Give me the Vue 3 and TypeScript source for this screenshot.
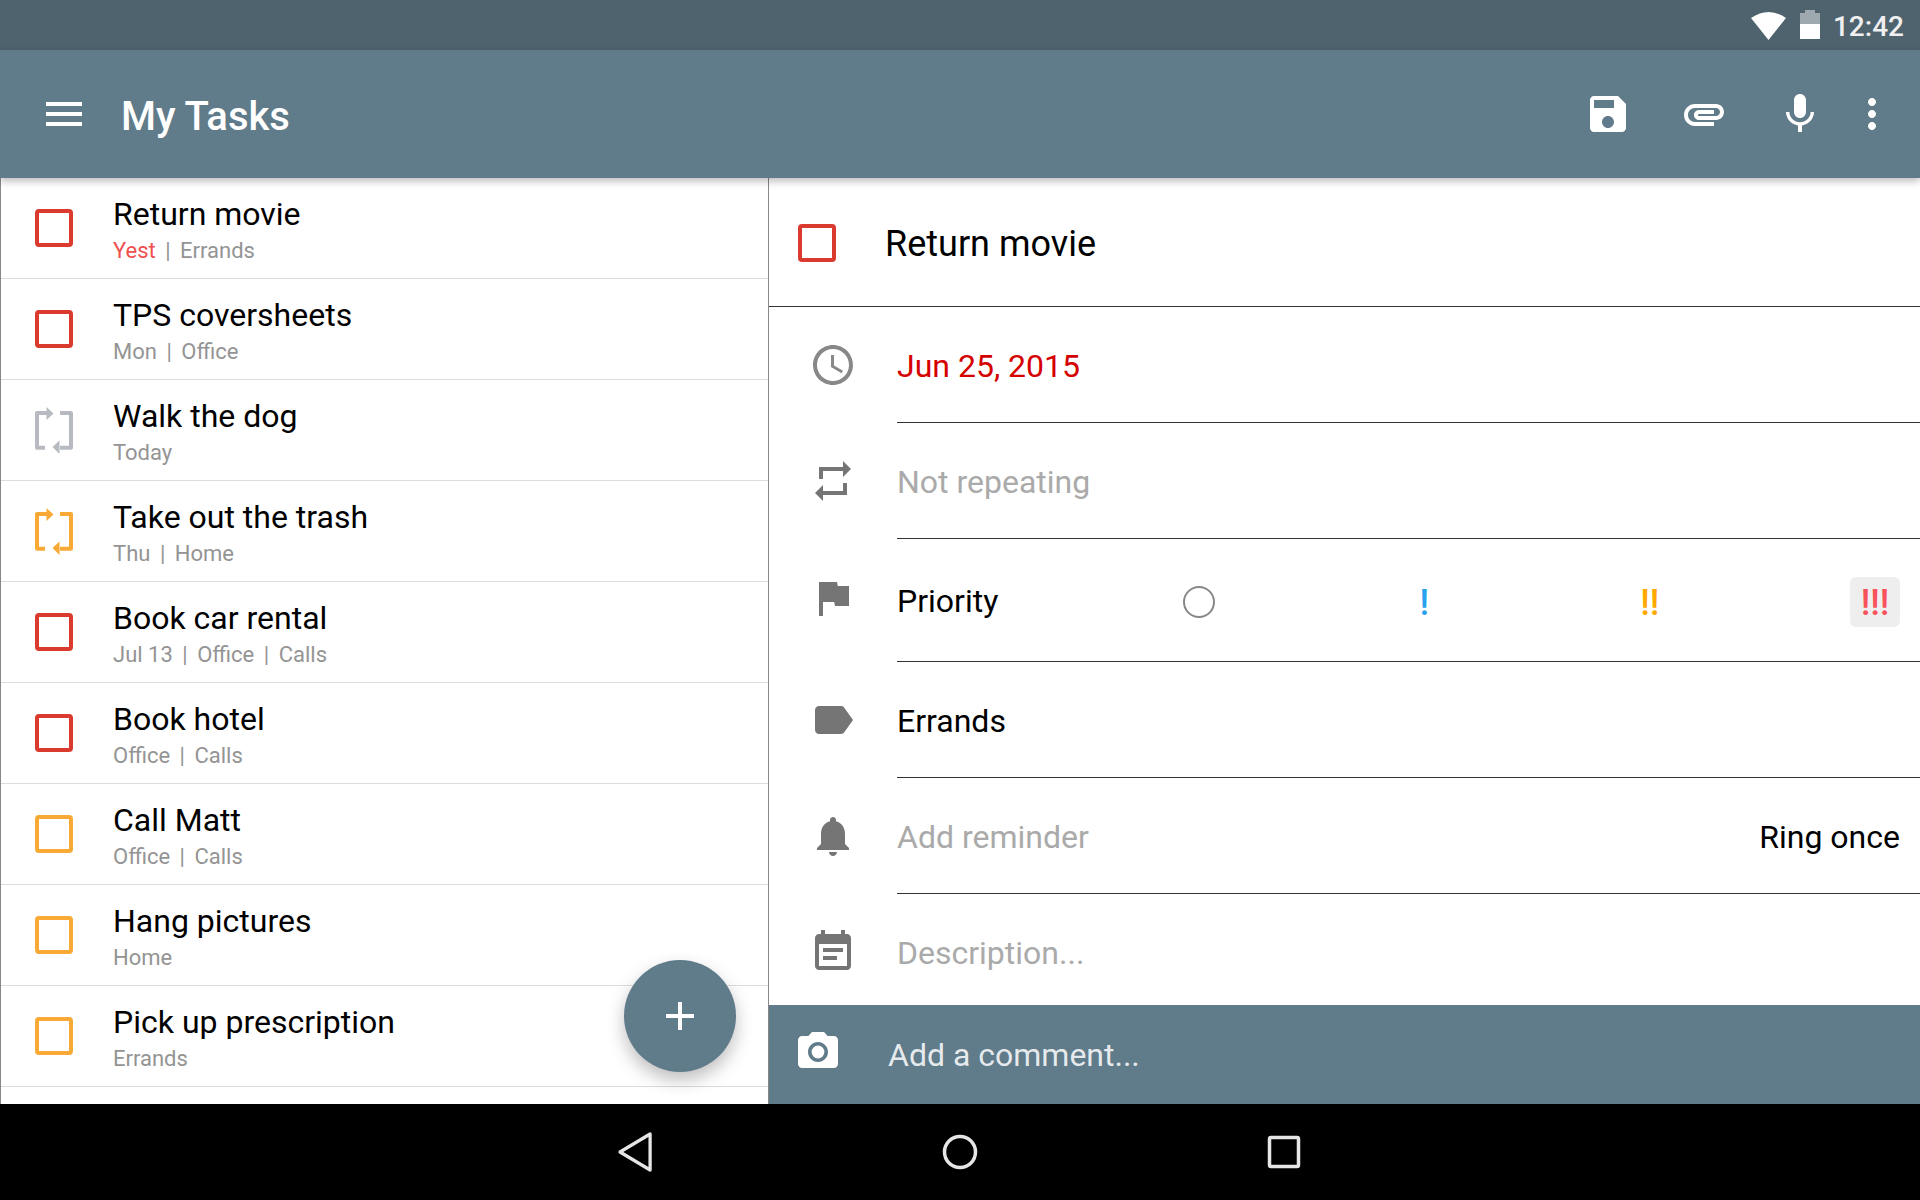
<template>
  <div class="screen">
    <!-- status bar -->
    <div class="status-bar">
      <svg class="wifi" width="35" height="28" viewBox="0 0 35 28"><path d="M0 6Q17.5-6 35 6L17.5 28Z" fill="#fff" /></svg>
      <svg class="battery" width="20" height="29" viewBox="0 0 20 29">
        <path d="M5 0h10v3h5v11H0V3h5z" fill="#fff" fill-opacity=".45" />
        <path d="M0 14h20v15H0z" fill="#fff" />
      </svg>
      <span class="clock">12:42</span>
    </div>

    <!-- app bar -->
    <header class="app-bar">
      <svg class="icon menu" viewBox="0 0 24 24"><path :d="ICONS.menu" /></svg>
      <h1 class="app-title">My Tasks</h1>
      <div class="actions">
        <svg class="icon" viewBox="0 0 24 24"><path :d="ICONS.save" /></svg>
        <svg class="icon" viewBox="0 0 24 24"><path :d="ICONS.attach" /></svg>
        <svg class="icon" viewBox="0 0 24 24"><path :d="ICONS.mic" /></svg>
        <svg class="icon more" viewBox="0 0 24 24"><path :d="ICONS.more" /></svg>
      </div>
    </header>

    <main class="content">
      <!-- task list -->
      <section class="list-pane">
        <div v-for="task in tasks" :key="task.title" class="task">
          <svg v-if="task.repeat" class="check" width="38" height="47" viewBox="0 0 38 47" :style="{ color: task.color }">
            <path d="M13 6H2V40.7H10M25 6H36V40.7H25" fill="none" stroke="currentColor" stroke-width="4" stroke-linejoin="round" />
            <path d="M11.5 0L18.5 6.5L11.5 13ZM24.5 33.5L17.5 40L24.5 47Z" fill="currentColor" />
          </svg>
          <span v-else class="box" :style="{ borderColor: task.color }"></span>
          <div class="task-text">
            <div class="task-title">{{ task.title }}</div>
            <div class="task-meta">
              <template v-for="(part, i) in task.meta" :key="part">
                <span v-if="i > 0" class="sep">|</span>
                <span :class="{ overdue: part === 'Yest' }">{{ part }}</span>
              </template>
            </div>
          </div>
        </div>
        <button class="fab">
          <svg width="48" height="48" viewBox="0 0 24 24"><path :d="ICONS.plus" fill="#fff" /></svg>
        </button>
      </section>

      <!-- task detail -->
      <section class="detail-pane">
        <div class="detail-head">
          <span class="box box-head"></span>
          <span class="detail-title">Return movie</span>
        </div>
        <div class="detail-rows">
          <div class="row">
            <svg class="icon row-icon clock-icon" viewBox="0 0 24 24"><path :d="ICONS.clock" /></svg>
            <div class="row-body date">Jun 25, 2015</div>
          </div>
          <div class="row">
            <svg class="icon row-icon" viewBox="0 0 24 24"><path :d="ICONS.repeat" /></svg>
            <div class="row-body hint">Not repeating</div>
          </div>
          <div class="row row-priority">
            <svg class="icon row-icon flag" viewBox="0 0 24 24"><path :d="ICONS.flag" /></svg>
            <div class="row-body">
              <span class="priority-label">Priority</span>
              <div class="priorities">
                <span class="prio"><i class="prio-none"></i></span>
                <span class="prio low">!</span>
                <span class="prio mid">!!</span>
                <span class="prio high">!!!</span>
              </div>
            </div>
          </div>
          <div class="row">
            <svg class="icon row-icon" viewBox="0 0 24 24"><path :d="ICONS.label" /></svg>
            <div class="row-body">Errands</div>
          </div>
          <div class="row">
            <svg class="icon row-icon" viewBox="0 0 24 24"><path :d="ICONS.bell" /></svg>
            <div class="row-body spread">
              <span class="hint">Add reminder</span>
              <span>Ring once</span>
            </div>
          </div>
          <div class="row">
            <svg class="icon row-icon" viewBox="0 0 24 24"><path :d="ICONS.note" /></svg>
            <div class="row-body hint no-line">Description...</div>
          </div>
        </div>
        <div class="comment-bar">
          <svg class="icon camera" viewBox="0 0 24 24"><path :d="ICONS.camera" /><circle cx="12" cy="12" r="3.2" /></svg>
          <span>Add a comment...</span>
        </div>
      </section>
    </main>

    <!-- android nav bar -->
    <nav class="nav-bar">
      <svg width="48" height="48" viewBox="0 0 48 48"><path d="M8 24L40 6V42Z" transform="matrix(.94 0 0 1 .5 0)" /></svg>
      <svg width="48" height="48" viewBox="0 0 48 48"><circle cx="24" cy="24" r="15.5" /></svg>
      <svg width="48" height="48" viewBox="0 0 48 48"><rect x="9.5" y="9.5" width="29" height="29" rx="1.5" /></svg>
    </nav>
  </div>
</template>

<script setup lang="ts">
type Task = {
  title: string
  meta: string[]
  color: string
  repeat?: boolean
}

const RED = '#db3a2e'
const ORANGE = '#f9a935'
const GREY = '#b7bac0'

const tasks: Task[] = [
  { title: 'Return movie', meta: ['Yest', 'Errands'], color: RED },
  { title: 'TPS coversheets', meta: ['Mon', 'Office'], color: RED },
  { title: 'Walk the dog', meta: ['Today'], color: GREY, repeat: true },
  { title: 'Take out the trash', meta: ['Thu', 'Home'], color: ORANGE, repeat: true },
  { title: 'Book car rental', meta: ['Jul 13', 'Office', 'Calls'], color: RED },
  { title: 'Book hotel', meta: ['Office', 'Calls'], color: RED },
  { title: 'Call Matt', meta: ['Office', 'Calls'], color: ORANGE },
  { title: 'Hang pictures', meta: ['Home'], color: ORANGE },
  { title: 'Pick up prescription', meta: ['Errands'], color: ORANGE },
]

const ICONS = {
  menu: 'M3 18h18v-2H3v2zm0-5h18v-2H3v2zm0-7v2h18V6H3z',
  save: 'M17 3H5c-1.11 0-2 .9-2 2v14c0 1.1.89 2 2 2h14c1.1 0 2-.9 2-2V7l-4-4zm-5 16c-1.66 0-3-1.34-3-3s1.34-3 3-3 3 1.34 3 3-1.34 3-3 3zm3-10H5V5h10v4z',
  attach: 'M2 12.5C2 9.46 4.46 7 7.5 7H18c2.21 0 4 1.79 4 4s-1.79 4-4 4H9.5C8.12 15 7 13.88 7 12.5S8.12 10 9.5 10H17v2H9.41c-.55 0-.55 1 0 1H18c1.1 0 2-.9 2-2s-.9-2-2-2H7.5C5.57 9 4 10.57 4 12.5S5.57 16 7.5 16H17v2H7.5C4.46 18 2 15.54 2 12.5z',
  mic: 'M12 14c1.66 0 2.99-1.34 2.99-3L15 5c0-1.66-1.34-3-3-3S9 3.34 9 5v6c0 1.66 1.34 3 3 3zm5.3-3c0 3-2.54 5.1-5.3 5.1S6.7 14 6.7 11H5c0 3.41 2.72 6.23 6 6.72V21h2v-3.28c3.28-.48 6-3.3 6-6.72h-1.7z',
  more: 'M12 8c1.1 0 2-.9 2-2s-.9-2-2-2-2 .9-2 2 .9 2 2 2zm0 2c-1.1 0-2 .9-2 2s.9 2 2 2 2-.9 2-2-.9-2-2-2zm0 6c-1.1 0-2 .9-2 2s.9 2 2 2 2-.9 2-2-.9-2-2-2z',
  plus: 'M19 13h-6v6h-2v-6H5v-2h6V5h2v6h6v2z',
  clock: 'M11.99 2C6.47 2 2 6.48 2 12s4.47 10 9.99 10C17.52 22 22 17.52 22 12S17.52 2 11.99 2zM12 20c-4.42 0-8-3.58-8-8s3.58-8 8-8 8 3.58 8 8-3.58 8-8 8zm.5-13H11v6l5.25 3.15.75-1.23-4.5-2.67z',
  repeat: 'M7 7h10v3l4-4-4-4v3H5v6h2V7zm10 10H7v-3l-4 4 4 4v-3h12v-6h-2v4z',
  flag: 'M14.4 6L14 4H5v17h2v-7h5.6l.4 2h7V6z',
  label: 'M17.63 5.84C17.27 5.33 16.67 5 16 5L5 5.01C3.9 5.01 3 5.9 3 7v10c0 1.1.9 1.99 2 1.99L16 19c.67 0 1.27-.33 1.63-.84L22 12l-4.37-6.16z',
  bell: 'M12 22c1.1 0 2-.9 2-2h-4c0 1.1.89 2 2 2zm6-6v-5c0-3.07-1.64-5.64-4.5-6.32V4c0-.83-.67-1.5-1.5-1.5s-1.5.67-1.5 1.5v.68C7.63 5.36 6 7.92 6 11v5l-2 2v1h16v-1l-2-2z',
  note: 'M17 10H7v2h10v-2zm2-7h-1V1h-2v2H8V1H6v2H5c-1.11 0-1.99.9-1.99 2L3 19c0 1.1.89 2 2 2h14c1.1 0 2-.9 2-2V5c0-1.1-.9-2-2-2zm0 16H5V8h14v11zm-5-5H7v2h7v-2z',
  camera: 'M9 2L7.17 4H4c-1.1 0-2 .9-2 2v12c0 1.1.9 2 2 2h16c1.1 0 2-.9 2-2V6c0-1.1-.9-2-2-2h-3.17L15 2H9zm3 15c-2.76 0-5-2.24-5-5s2.24-5 5-5 5 2.24 5 5-2.24 5-5 5z',
}
</script>

<style scoped>
.screen {
  width: 1920px;
  height: 1200px;
  display: flex;
  flex-direction: column;
  overflow: hidden;
  background: #fff;
  font-family: Roboto, "Liberation Sans", sans-serif;
  color: #000;
}

.icon {
  width: 48px;
  height: 48px;
  flex: none;
  fill: #fff;
}

/* Status bar */
.status-bar {
  height: 50px;
  flex: none;
  display: flex;
  align-items: center;
  justify-content: flex-end;
  padding-right: 16px;
  background: #4e636e;
}
.wifi { margin-right: 14px; margin-top: 1px; }
.battery { margin-right: 13px; margin-top: -1px; }
.clock {
  color: #f0f0f0;
  font-size: 28px;
  font-weight: 500;
  line-height: 50px;
  padding-top: 3px;
}

/* App bar */
.app-bar {
  position: relative;
  z-index: 2;
  height: 128px;
  flex: none;
  display: flex;
  align-items: center;
  padding: 0 24px 0 40px;
  background: #607b8a;
  box-shadow: 0 3px 8px rgba(0, 0, 0, .28);
}
.app-title {
  margin: 4px 0 0 33px;
  color: #fff;
  font-size: 40px;
  font-weight: 500;
}
.actions {
  margin-left: auto;
  display: flex;
  gap: 48px;
}
.more { margin-left: -24px; }

/* Main panes */
.content {
  flex: 1;
  min-height: 0;
  display: flex;
}
.list-pane {
  position: relative;
  width: 769px;
  box-sizing: border-box;
  flex: none;
  border-left: 1px solid #888;
  border-right: 1px solid #888;
  overflow: hidden;
}
.task {
  height: 101px;
  box-sizing: border-box;
  display: flex;
  align-items: center;
  padding-left: 34px;
  border-bottom: 1px solid #ddd;
}
.box {
  width: 38px;
  height: 38px;
  flex: none;
  box-sizing: border-box;
  border: 4px solid #db3a2e;
  border-radius: 4px;
}
.check { flex: none; }
.task-text {
  margin: 5px 0 0 40px;
}
.task-title {
  font-size: 32px;
  line-height: 38px;
}
.task-meta {
  margin-top: 3px;
  font-size: 22px;
  line-height: 30px;
  color: #949494;
}
.sep { margin: 0 9.5px; }
.overdue { color: #f05050; }

.fab {
  position: absolute;
  right: 32px;
  bottom: 32px;
  width: 112px;
  height: 112px;
  padding: 0;
  display: flex;
  align-items: center;
  justify-content: center;
  border: none;
  border-radius: 50%;
  background: #607b8a;
  box-shadow: 0 8px 18px rgba(0, 0, 0, .26);
}

/* Detail pane */
.detail-pane {
  flex: 1;
  min-width: 0;
  display: flex;
  flex-direction: column;
}
.detail-head {
  height: 129px;
  flex: none;
  box-sizing: border-box;
  display: flex;
  align-items: center;
  padding-left: 29px;
  border-bottom: 1px solid #333;
}
.box-head { margin-top: 1px; }
.detail-title {
  margin: 4px 0 0 49px;
  font-size: 36px;
}
.detail-rows {
  flex: 1;
  min-height: 0;
  overflow: hidden;
}
.row {
  height: 116px;
  display: flex;
  align-items: center;
  padding-left: 40px;
  font-size: 32px;
}
.row-priority { height: 123px; }
.row-icon {
  fill: #757575;
  margin-right: 40px;
}
.clock-icon { fill: #888; }
.flag { margin-bottom: 6px; }
.row-body {
  flex: 1;
  height: 100%;
  box-sizing: border-box;
  display: flex;
  align-items: center;
  padding: 3px 20px 0 0;
  border-bottom: 1px solid #333;
}
.no-line {
  padding-top: 1px;
  border-bottom: none;
}
.spread { justify-content: space-between; }
.date { color: #d50000; }
.hint { color: #aaa; }
.priority-label { margin-bottom: 2px; }

.priorities {
  width: 726px;
  margin-left: auto;
  display: flex;
  justify-content: space-between;
}
.prio {
  width: 50px;
  height: 50px;
  box-sizing: border-box;
  padding-top: 3px;
  display: flex;
  align-items: center;
  justify-content: center;
  border-radius: 6px;
  font-size: 36px;
  font-weight: 500;
}
.prio:first-child { padding-top: 0; }
.prio-none {
  width: 32px;
  height: 32px;
  box-sizing: border-box;
  border: 2px solid #888;
  border-radius: 50%;
}
.low { color: #29a3ee; }
.mid { color: #ffa800; }
.high {
  color: #f9525a;
  background: #eee;
}

.comment-bar {
  height: 99px;
  flex: none;
  display: flex;
  align-items: center;
  padding-left: 25px;
  background: #607b8a;
  color: rgba(255, 255, 255, .85);
  font-size: 32px;
}
.camera {
  margin: -5px 46px 0 0;
}
.camera path, .camera circle { fill: #fff; }

/* Nav bar */
.nav-bar {
  height: 96px;
  flex: none;
  display: flex;
  align-items: center;
  justify-content: center;
  gap: 276px;
  background: #000;
}
.nav-bar svg * {
  fill: none;
  stroke: #e6e6e6;
  stroke-width: 3.5;
  stroke-linejoin: round;
}
</style>

<style>
html, body {
  margin: 0;
  background: #fff;
}
</style>
